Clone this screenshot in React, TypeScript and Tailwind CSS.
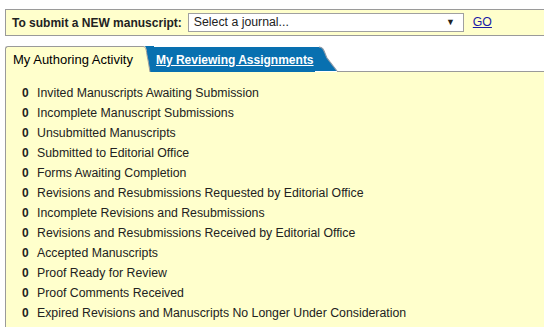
import React from 'react';

const items = [
  'Invited Manuscripts Awaiting Submission',
  'Incomplete Manuscript Submissions',
  'Unsubmitted Manuscripts',
  'Submitted to Editorial Office',
  'Forms Awaiting Completion',
  'Revisions and Resubmissions Requested by Editorial Office',
  'Incomplete Revisions and Resubmissions',
  'Revisions and Resubmissions Received by Editorial Office',
  'Accepted Manuscripts',
  'Proof Ready for Review',
  'Proof Comments Received',
  'Expired Revisions and Manuscripts No Longer Under Consideration',
];

export default function App() {
  return (
    <div className="w-[544px] h-[327px] overflow-hidden bg-white text-[12px] text-[#222] font-['Liberation_Sans',Arial,sans-serif]">
      {/* submit bar */}
      <div className="ml-[5px] mt-[9px] h-[27px] w-[560px] flex items-center border border-r-0 border-[#9a9a9a] bg-[#ffffcc] pl-[6px]">
        <span className="font-bold">To submit a NEW manuscript:</span>
        <div className="ml-[6px] h-[19px] w-[276px] flex items-center justify-between border border-[#a0a0a0] bg-white pl-[5px] pr-[8px]">
          <span className="text-[12.3px]">Select a journal...</span>
          <span className="text-[9px]">▼</span>
        </div>
        <a className="ml-[9px] underline text-[#1a1aa6] text-[12.3px]">GO</a>
      </div>

      {/* tabs */}
      <div className="ml-[5px] mt-[10px] flex h-[26px]">
        <div className="h-[26px] flex items-center pl-[7px] pr-[6px] bg-[#ffffcc] border-l border-t border-[#9a9a9a] rounded-tl-[3px] text-[13px] text-black">
          My Authoring Activity
        </div>
        <svg width="15" height="26" viewBox="0 0 15 26" className="block shrink-0">
          <path d="M5 0 H15 V26 H11 L9 14 C7 6 8 0 5 0 Z" fill="#0870b0" />
          <path d="M0 0 H4 C8 0 7 6 9 14 L11 26 H0 Z" fill="#ffffcc" />
          <path d="M0 0.5 H4 C8 0.5 7 6 9 14 L11 26" fill="none" stroke="#9a9a9a" />
        </svg>
        <div className="h-[25px] mt-[1px] flex items-center bg-[#0870b0] pl-[2px] pr-[1px]">
          <span className="text-white font-bold underline text-[12px]">My Reviewing Assignments</span>
        </div>
        <svg width="24" height="26" viewBox="0 0 24 26" className="block shrink-0">
          <path d="M0 1 H4 C9 1 9 6 12 12 L22 25 H0 Z" fill="#0870b0" />
          <path d="M4 1 C9 1 9 6 12 12 L22 25" fill="none" stroke="#8c9aa8" strokeWidth="1.2" />
          <path d="M22 25.5 H24" stroke="#9a9a9a" />
        </svg>
        <div className="flex-1 border-b border-[#9a9a9a] h-[26px]" />
      </div>

      {/* panel */}
      <div className="ml-[5px] border-l border-[#9a9a9a] bg-[#ffffcc] h-[260px] pt-[11px] pl-[16px]">
        {items.map((t) => (
          <div key={t} className="flex h-[20px] items-center">
            <span className="w-[15px] font-bold">0</span>
            <span className="text-[12.3px]">{t}</span>
          </div>
        ))}
      </div>
    </div>
  );
}
